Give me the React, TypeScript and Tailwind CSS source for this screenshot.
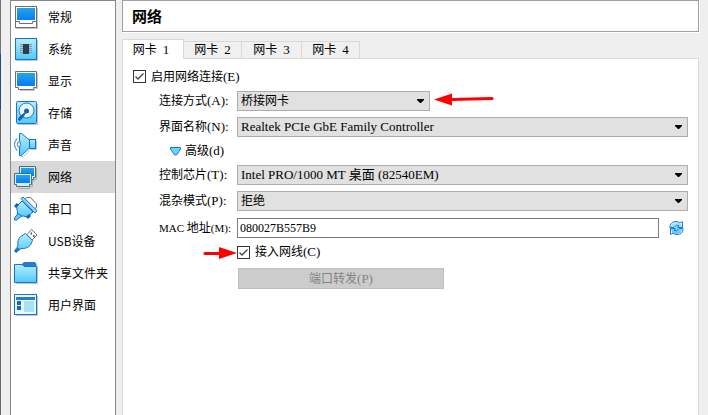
import React, { useState } from "react";
import type { ReactNode } from "react";

const icon = "h-[26px] w-[26px] shrink-0";

function Gradients() {
  return (
    <svg className="absolute h-0 w-0" aria-hidden="true">
      <defs>
        <linearGradient id="screen" x1="0" y1="0" x2="0" y2="1">
          <stop offset="0" stopColor="#22a7e6" />
          <stop offset="1" stopColor="#0a7bf7" />
        </linearGradient>
        <linearGradient id="sky" x1="0" y1="0" x2="0" y2="1">
          <stop offset="0" stopColor="#b4edfd" />
          <stop offset="1" stopColor="#4fcaf9" />
        </linearGradient>
      </defs>
    </svg>
  );
}

function GeneralIcon() {
  return (
    <svg className={icon} viewBox="0 0 26 26" aria-hidden="true">
      <path d="M3 24.5H24.5V4" fill="none" stroke="#c4c4c4" />
      <rect x="2.5" y="2.5" width="21" height="21" fill="#fff" stroke="#6e6e6e" />
      <rect x="4" y="4" width="18" height="12" fill="url(#screen)" />
      <path d="M3 17.5H6.5V19.5H19.5V17.5H23" fill="none" stroke="#6e6e6e" />
    </svg>
  );
}

function SystemIcon() {
  return (
    <svg className={icon} viewBox="0 0 26 26" aria-hidden="true">
      <path d="M3 24.5H24.5V4" fill="none" stroke="#c4c4c4" />
      <rect x="2.5" y="2.5" width="21" height="21" fill="url(#sky)" stroke="#1a72d0" />
      <path d="M7 8.5H19M7 10.5H19M7 12.5H19M7 14.5H19M7 16.5H19" stroke="#8298a4" />
      <rect x="10" y="8" width="6" height="10" fill="#333b47" />
    </svg>
  );
}

function DisplayIcon() {
  return (
    <svg className={icon} viewBox="0 0 26 26" aria-hidden="true">
      <path d="M7 22.5H21.5V20.5H24.5V5" fill="none" stroke="#c4c4c4" />
      <path d="M2.5 3.5H23.5V19.5H20.5V21.5H5.5V19.5H2.5Z" fill="#fff" stroke="#6e6e6e" />
      <rect x="4" y="5" width="18" height="13" fill="url(#screen)" />
    </svg>
  );
}

function StorageIcon() {
  return (
    <svg className={icon} viewBox="0 0 26 26" aria-hidden="true">
      <path d="M5 24.5H24.5V4" fill="none" stroke="#c4c4c4" />
      <rect x="3.5" y="1.5" width="20" height="22" rx="1" fill="url(#sky)" stroke="#1a72d0" />
      <circle cx="13.5" cy="10.5" r="7.5" fill="#eef9ff" stroke="#1a72d0" />
      <circle cx="13.5" cy="11" r="2.5" fill="#0d63c4" />
      <path d="M13 12L10 17L7 20.5L5.5 19.5L7 16.5Z" fill="#0d63c4" stroke="#0d63c4" />
      <path d="M17 16L19 18.5" stroke="#4fb5ec" strokeWidth="2" />
    </svg>
  );
}

function AudioIcon() {
  return (
    <svg className={icon} viewBox="0 0 26 26" aria-hidden="true">
      <path d="M8 24.5H10.5L16.5 18.5M17 17.5H23.5V9" fill="none" stroke="#c4c4c4" />
      <path d="M6.5 1.5H8.5L16.5 8V16L8.5 23.5H6.5V16L7.5 12.5L6.5 8Z" fill="url(#sky)" stroke="#1a72d0" />
      <rect x="16.5" y="7.5" width="6" height="9" fill="url(#sky)" stroke="#1a72d0" />
      <path d="M5.5 9.5Q3 12.5 5.5 15.5M4 6.5Q-1 12.5 4 18.5" fill="none" stroke="#1a72d0" />
    </svg>
  );
}

function NetworkIcon() {
  return (
    <svg className={icon} viewBox="0 0 26 26" aria-hidden="true">
      <path d="M23.5 4V15.5H21V17.5M19.5 11V22.5H17V24.5H5" fill="none" stroke="#aaa" />
      <path d="M6.5 2.5H22.5V13.5H20.5V15.5H8.5V13.5H6.5Z" fill="#d5efff" stroke="#467083" />
      <rect x="8" y="4" width="13" height="8" fill="url(#screen)" />
      <path d="M1.5 9.5H18.5V20.5H16.5V22.5H3.5V20.5H1.5Z" fill="#d5efff" stroke="#467083" />
      <rect x="3" y="11" width="14" height="8" fill="url(#screen)" />
    </svg>
  );
}

function SerialIcon() {
  return (
    <svg className={icon} viewBox="0 0 26 26" aria-hidden="true">
      <path d="M12 3.5L13.5 1.5H17.5L23.5 8V11.5L21 13Z" fill="#fff" stroke="#6e6e6e" />
      <path d="M3.5 10.5L9 5L20 16L14.5 21L10 20L5 20.5L4.5 15.5Z" fill="url(#sky)" stroke="#1a72d0" />
      <path d="M8.5 20L3.5 24H1.5V22L5 17.5Z" fill="#5fcdf9" stroke="#1a72d0" />
      <path d="M8 2.5L10 1L24 14.5L22 17Z" fill="#8edcfb" stroke="#1a72d0" />
      <path d="M2 11L5 8M14 22L17 19" stroke="#0d63c4" strokeWidth="3" />
    </svg>
  );
}

function UsbIcon() {
  return (
    <svg className={icon} viewBox="0 0 26 26" aria-hidden="true">
      <path d="M14 6.5L18.5 1.5L24 7L19 12Z" fill="#fff" stroke="#757575" />
      <path d="M17.5 5.5H19M20 8H21.5" stroke="#555" strokeWidth="2" />
      <path d="M12.5 5.5L19.5 12.5L17.5 17Q14 21 8 20.5L3 24.5L1.5 23L5 18Q4 12 7.5 8.5Z" fill="url(#sky)" stroke="#1a72d0" />
      <path d="M5 19.5L7 21L3 24.5L1.5 23Z" fill="#1a72d0" />
    </svg>
  );
}

function FolderIcon() {
  return (
    <svg className={icon} viewBox="0 0 26 26" aria-hidden="true">
      <path d="M3 23.5H24.5V6" fill="none" stroke="#c4c4c4" />
      <path d="M9 6V4L11 2H22L23.5 4V6Z" fill="#2a79d0" />
      <path d="M1.5 4.5H9L11 6.5H23.5V22.5H1.5Z" fill="url(#sky)" stroke="#1a72d0" />
    </svg>
  );
}

function InterfaceIcon() {
  return (
    <svg className={icon} viewBox="0 0 26 26" aria-hidden="true">
      <path d="M3 23.5H24.5V4" fill="none" stroke="#c4c4c4" />
      <rect x="1.5" y="2.5" width="22" height="20" fill="#e8f8ff" stroke="#1a72d0" />
      <rect x="3" y="5" width="19" height="3" fill="#2a79d0" />
      <rect x="4" y="9" width="4" height="4" fill="#1468c8" />
      <rect x="4" y="14" width="4" height="4" fill="#1468c8" />
      <rect x="11" y="9" width="10" height="11" fill="#a5e2f8" />
    </svg>
  );
}

function RefreshIcon() {
  return (
    <svg className="h-4 w-4" viewBox="0 0 16 16" aria-hidden="true">
      <circle cx="7.5" cy="8" r="6" fill="url(#sky)" />
      <path d="M1 8V6Q2 1.500 7 1.500Q9.500 1.500 11 3L13.500 1.500V7.500H8.500L10 5.500Q7 4 5.500 7" fill="none" stroke="#2379d8" />
      <path d="M14 8.500V10Q13 14.500 8 14.500Q5.500 14.500 4 13L1.500 14.500V8.500H6.500L5 10.500Q8 12 9.500 9" fill="none" stroke="#2379d8" />
      <path d="M14 8.500H10M1 7.500H5" stroke="#2379d8" />
    </svg>
  );
}

const sections: { name: string; Icon: () => ReactNode }[] = [
  { name: "常规", Icon: GeneralIcon },
  { name: "系统", Icon: SystemIcon },
  { name: "显示", Icon: DisplayIcon },
  { name: "存储", Icon: StorageIcon },
  { name: "声音", Icon: AudioIcon },
  { name: "网络", Icon: NetworkIcon },
  { name: "串口", Icon: SerialIcon },
  { name: "USB设备", Icon: UsbIcon },
  { name: "共享文件夹", Icon: FolderIcon },
  { name: "用户界面", Icon: InterfaceIcon },
];

const tabs = [
  { id: 1, width: "w-[62px]" },
  { id: 2, width: "w-[58px]" },
  { id: 3, width: "w-[60px]" },
  { id: 4, width: "w-[58px]" },
];

function Latin({ children, small = false }: { children: ReactNode; small?: boolean }) {
  return <span className={small ? "text-[11px]" : "text-[13px]"}>{children}</span>;
}

function FieldLabel({ id, prefix, text, hint }: { id: string; prefix?: string; text: string; hint: string }) {
  return (
    <label htmlFor={id} className="w-[72px] shrink-0 whitespace-nowrap">
      {prefix && <Latin small>{prefix} </Latin>}
      {text}
      <Latin small={Boolean(prefix)}>({hint}):</Latin>
    </label>
  );
}

function Dropdown({ id, value, latin = false }: { id: string; value: string; latin?: boolean }) {
  return (
    <div className="relative h-5 w-full">
      <select
        id={id}
        className={`block h-5 w-full appearance-none border border-[#adadad] bg-[#e1e1e1] pr-5 pl-[3px] leading-[18px] outline-none ${latin ? "text-[13px]" : "text-xs"}`}
      >
        <option>{value}</option>
      </select>
      <svg className="pointer-events-none absolute top-2 right-1.5 h-1 w-[7px]" viewBox="0 0 7 4" aria-hidden="true">
        <path d="M0 0H7V1L4 4H3L0 1Z" fill="#000" />
      </svg>
    </div>
  );
}

function Checkbox({ id }: { id: string }) {
  return (
    <span className="relative h-[13px] w-[13px] shrink-0">
      <input id={id} type="checkbox" defaultChecked className="peer block h-[13px] w-[13px] appearance-none border border-[#333] bg-white" />
      <svg className="pointer-events-none absolute inset-0 hidden h-[13px] w-[13px] peer-checked:block" viewBox="0 0 13 13" aria-hidden="true">
        <path d="M2.5 6.5L5 9L10.5 3.5" fill="none" stroke="#444" strokeWidth="1.3" />
      </svg>
    </span>
  );
}

export default function App() {
  const [section, setSection] = useState("网络");
  const [tab, setTab] = useState(1);

  return (
    <div className="flex min-h-screen bg-[#efefef] font-['Liberation_Serif','Noto_Sans_CJK_SC',serif] text-xs text-black">
      <Gradients />
      <div className="flex w-px shrink-0 flex-col" aria-hidden="true">
        <div className="h-[54px] bg-[#737373]" />
        <div className="h-14 bg-[#1b4f80]" />
        <div className="grow bg-[#686868]" />
      </div>

      <nav className="ml-[9px] w-[106px] shrink-0 border border-b-0 border-[#828790] bg-white font-['Noto_Sans_CJK_SC',sans-serif]">
        {sections.map(({ name, Icon }) => (
          <button
            key={name}
            type="button"
            onClick={() => setSection(name)}
            className={`flex h-8 w-full items-center gap-[9px] pl-0.5 text-left whitespace-nowrap ${section === name ? "bg-[#d9d9d9]" : ""}`}
          >
            <Icon />
            {name}
          </button>
        ))}
      </nav>

      <main className="mr-2 ml-1.5 flex min-w-0 grow flex-col">
        <header className="border-r border-b border-white">
          <h1 className="h-8 border border-[#a0a0a0] bg-white pl-[9px] font-['Noto_Sans_CJK_SC',sans-serif] text-[15px] leading-[30px] font-bold">
            网络
          </h1>
        </header>

        <div role="tablist" className="mt-1.5 flex items-end">
          {tabs.map(({ id, width }) => (
            <button
              key={id}
              type="button"
              role="tab"
              aria-selected={tab === id}
              onClick={() => setTab(id)}
              className={`flex items-center justify-center gap-1.5 border-t border-r border-[#d9d9d9] whitespace-nowrap ${width} ${
                tab === id ? "relative z-10 -mb-px h-5 border-l bg-white pr-1" : "h-[17px] bg-[#f0f0f0]"
              }`}
            >
              <span>网卡</span>
              <Latin>{id}</Latin>
            </button>
          ))}
        </div>

        <section role="tabpanel" className="mr-px grow border border-b-0 border-[#d9d9d9] bg-white px-2.5 pt-2">
          <div className="flex h-[19px] items-center gap-[5px]">
            <Checkbox id="enable" />
            <label htmlFor="enable">
              启用网络连接<Latin>(E)</Latin>
            </label>
          </div>

          <div className="pl-[26px]">
            <div className="mt-[5px] flex h-5 items-center gap-1.5">
              <FieldLabel id="attach" text="连接方式" hint="A" />
              <div className="relative w-[193px]">
                <Dropdown id="attach" value="桥接网卡" />
                <svg className="absolute top-0.5 left-[197px] h-3.5 w-[60px]" viewBox="0 0 60 14" aria-hidden="true">
                  <path d="M0 6.5L18 .5V12.5Z" fill="#f00" />
                  <path d="M17 6.5L58 5.5" stroke="#f00" strokeWidth="3" strokeLinecap="round" />
                </svg>
              </div>
            </div>

            <div className="mt-1.5 flex h-5 items-center gap-1.5">
              <FieldLabel id="adapter" text="界面名称" hint="N" />
              <Dropdown id="adapter" value="Realtek PCIe GbE Family Controller" latin />
            </div>

            <button type="button" className="mt-1 flex h-5 items-center gap-1 pl-[11px]">
              <svg className="h-[9px] w-[11px]" viewBox="0 0 11 9" aria-hidden="true">
                <path d="M.5 .5H10.5V2L6.5 8H4.5L.5 2Z" fill="#6fd3fc" stroke="#1a72d0" />
              </svg>
              <span>
                高级<Latin>(d)</Latin>
              </span>
            </button>

            <div className="mt-1 flex h-5 items-center gap-1.5">
              <FieldLabel id="chip" text="控制芯片" hint="T" />
              <Dropdown id="chip" value="Intel PRO/1000 MT 桌面 (82540EM)" latin />
            </div>

            <div className="mt-1.5 flex h-5 items-center gap-1.5">
              <FieldLabel id="promiscuous" text="混杂模式" hint="P" />
              <Dropdown id="promiscuous" value="拒绝" />
            </div>

            <div className="mt-[7px] flex h-5 items-center gap-1.5">
              <FieldLabel id="mac" prefix="MAC" text="地址" hint="M" />
              <input id="mac" defaultValue="080027B557B9" className="h-5 min-w-0 grow border border-[#7a7a7a] bg-white px-0.5 text-xs outline-none" />
              <button type="button" aria-label="刷新" className="mr-[3px] ml-1">
                <RefreshIcon />
              </button>
            </div>

            <div className="relative mt-1 flex h-5 items-center gap-[5px] pl-[78px]">
              <svg className="absolute top-1 left-11 h-3.5 w-[34px]" viewBox="0 0 34 14" aria-hidden="true">
                <path d="M34 7L16 1V13Z" fill="#f00" />
                <path d="M2 7.5H17" stroke="#f00" strokeWidth="3" strokeLinecap="round" />
              </svg>
              <Checkbox id="cable" />
              <label htmlFor="cable">
                接入网线<Latin>(C)</Latin>
              </label>
            </div>

            <button type="button" disabled className="mt-1.5 ml-[79px] block h-[21px] w-[206px] border border-[#bfbfbf] bg-[#ccc] text-[#838383]">
              端口转发<Latin>(P)</Latin>
            </button>
          </div>
        </section>
      </main>
    </div>
  );
}
